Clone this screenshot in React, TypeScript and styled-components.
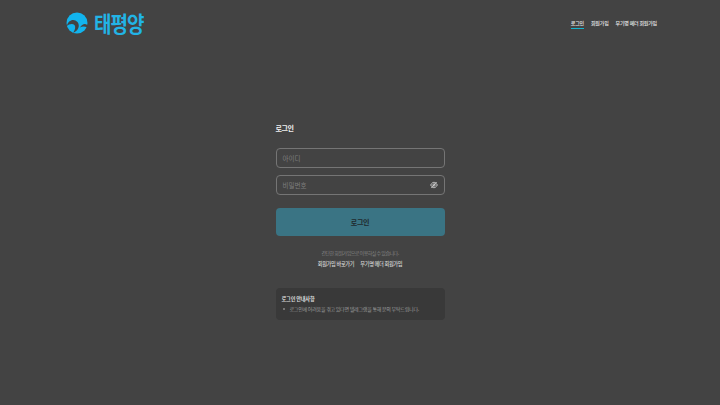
import React from 'react';
import styled, { createGlobalStyle } from 'styled-components';

const GlobalStyle = createGlobalStyle`
  html, body {
    margin: 0;
    padding: 0;
    background: #434343;
    font-family: "Noto Sans CJK KR", "Noto Sans", sans-serif;
  }
`;

const Page = styled.div`
  width: 720px;
  height: 405px;
  overflow: hidden;
  display: flex;
  flex-direction: column;
  background: #434343;
`;

const Header = styled.header`
  height: 46px;
  padding: 0 63px 0 66px;
  display: flex;
  align-items: center;
  justify-content: space-between;
`;

const Logo = styled.div`
  display: flex;
  align-items: center;
  gap: 6px;
`;

const LogoText = styled.span`
  display: inline-block;
  font-size: 19px;
  line-height: 24px;
  font-weight: 700;
  color: #22b4e6;
  letter-spacing: -1px;
  transform: scaleY(1.12);
`;

const Nav = styled.nav`
  display: flex;
  gap: 7px;
  align-items: flex-start;
`;

const NavLink = styled.a<{ $active?: boolean }>`
  font-size: 5px;
  line-height: 9px;
  font-weight: 500;
  letter-spacing: -0.2px;
  color: #e8e8e8;
  padding-bottom: 1px;
  border-bottom: 1.5px solid ${p => (p.$active ? '#13b5cf' : 'transparent')};
`;

const Main = styled.main`
  width: 169px;
  margin: 77px auto 0;
  display: flex;
  flex-direction: column;
`;

const Title = styled.h1`
  margin: 0 0 14px;
  font-size: 7px;
  line-height: 11px;
  font-weight: 700;
  letter-spacing: -0.4px;
  color: #f0f0f0;
`;

const Field = styled.div`
  box-sizing: border-box;
  height: 20px;
  margin-bottom: 7px;
  padding: 0 6px;
  display: flex;
  align-items: center;
  justify-content: space-between;
  border: 1px solid #757575;
  border-radius: 4px;
`;

const Placeholder = styled.span`
  font-size: 6.5px;
  color: #7f7f7f;
`;

const EyeIcon = styled.svg`
  width: 8px;
  height: 8px;
  fill: none;
  stroke: #d8d8d8;
`;

const LoginButton = styled.button`
  height: 28px;
  margin-top: 6px;
  padding: 0;
  border: none;
  border-radius: 4px;
  background: #3a7484;
  color: #1f2a2e;
  font-family: inherit;
  font-size: 7px;
  font-weight: 700;
  letter-spacing: -0.3px;
`;

const Hint = styled.p`
  margin: 13px 0 0;
  text-align: center;
  font-size: 5px;
  line-height: 8px;
  letter-spacing: -0.5px;
  color: #858585;
`;

const Links = styled.div`
  margin-top: 2px;
  display: flex;
  justify-content: center;
  gap: 6px;
`;

const TextLink = styled.a`
  font-size: 5.2px;
  line-height: 9px;
  font-weight: 500;
  letter-spacing: -0.3px;
  color: #d4d4d4;
`;

const Notice = styled.section`
  margin-top: 20px;
  height: 32px;
  box-sizing: border-box;
  padding: 7px 6px;
  border-radius: 4px;
  background: #393939;
`;

const NoticeTitle = styled.div`
  font-size: 5.2px;
  line-height: 8px;
  font-weight: 700;
  letter-spacing: -0.2px;
  color: #dedede;
`;

const NoticeItem = styled.div`
  margin-top: 2px;
  display: flex;
  align-items: center;
  gap: 5px;
  font-size: 5px;
  line-height: 8px;
  letter-spacing: -0.24px;
  color: #9c9c9c;
  white-space: nowrap;
`;

const Bullet = styled.i`
  width: 2px;
  height: 2px;
  margin-left: 1px;
  border-radius: 50%;
  background: #8a8a8a;
`;

export default function App() {
  return (
    <Page>
      <GlobalStyle />
      <Header>
        <Logo>
          <svg width="22" height="22" viewBox="0 0 22 22">
            <circle cx="11" cy="11" r="10.5" fill="#12b4ee" />
            <path d="M0.8 14C2 8 8 6 11.500 10 14.500 14 12 19 7 21 9 18 10 15 8.500 13 6.500 11 3 12 0.800 14z" fill="#434343" />
            <path d="M14 15.500C16 12 19 11 21.300 13L21 15.500C19 14 16 14 14 15.500z" fill="#434343" />
          </svg>
          <LogoText>태평양</LogoText>
        </Logo>
        <Nav>
          <NavLink $active>로그인</NavLink>
          <NavLink>회원가입</NavLink>
          <NavLink>무기명 메더 회원가입</NavLink>
        </Nav>
      </Header>
      <Main>
        <Title>로그인</Title>
        <Field>
          <Placeholder>아이디</Placeholder>
        </Field>
        <Field>
          <Placeholder>비밀번호</Placeholder>
          <EyeIcon viewBox="0 0 24 24">
            <path d="M2 12c3-6 7-8 10-8s7 2 10 8c-3 6-7 8-10 8s-7-2-10-8z" strokeWidth="2.500" />
            <circle cx="12" cy="12" r="3.500" strokeWidth="2.500" />
            <path d="M4 21 20 3" strokeWidth="2.500" />
          </EyeIcon>
        </Field>
        <LoginButton>로그인</LoginButton>
        <Hint>간단한 회원가입으로 이용하실 수 있습니다.</Hint>
        <Links>
          <TextLink>회원가입 바로가기</TextLink>
          <TextLink>무기명 메더 회원가입</TextLink>
        </Links>
        <Notice>
          <NoticeTitle>로그인 안내사항</NoticeTitle>
          <NoticeItem>
            <Bullet />
            로그인에 어려움을 겪고 있다면 텔레그램을 통해 문의 부탁드립니다.
          </NoticeItem>
        </Notice>
      </Main>
    </Page>
  );
}
